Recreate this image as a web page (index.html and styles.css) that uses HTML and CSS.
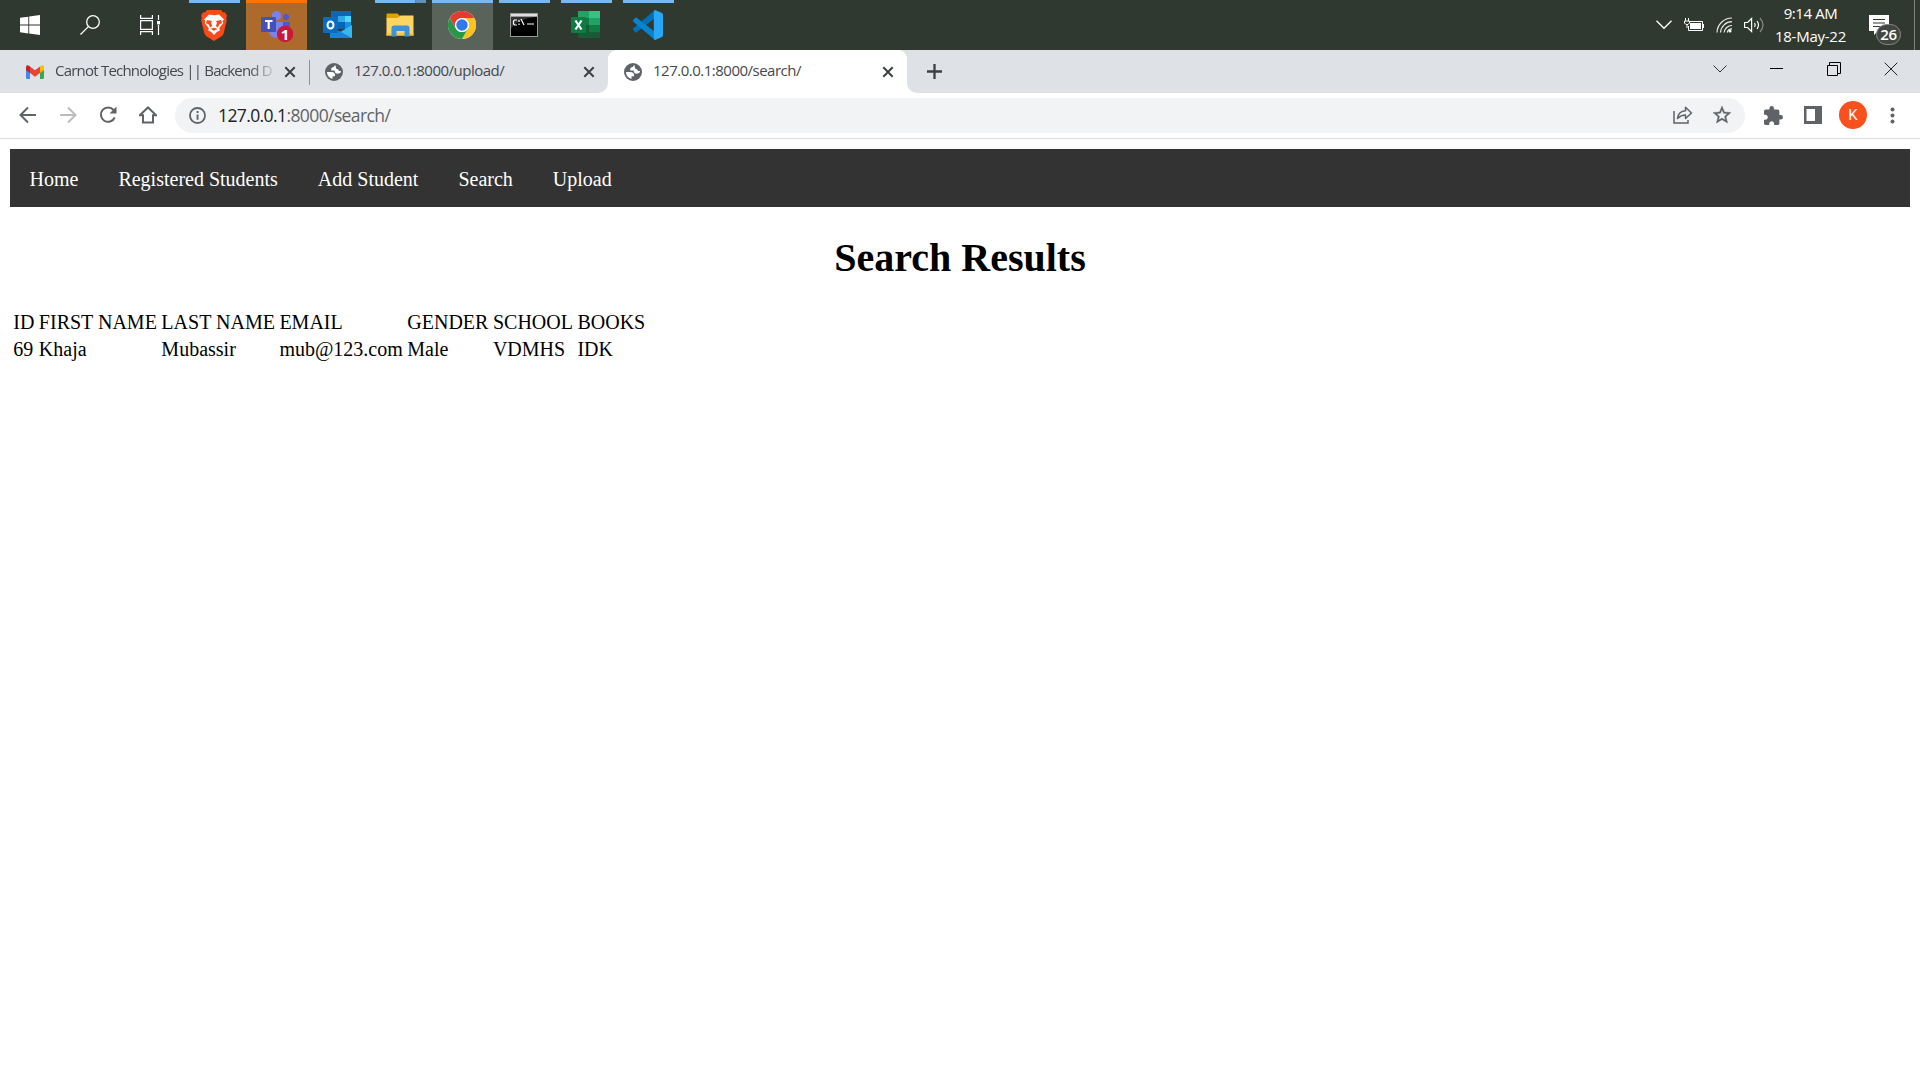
FILE: index.html
```html
<!DOCTYPE html>
<html lang="en">
<head>
<meta charset="utf-8">
<title>127.0.0.1:8000/search/</title>
<link rel="stylesheet" href="styles.css">
</head>
<body>
<svg class="defs" width="0" height="0">
  <symbol id="globe" viewBox="0 0 18 18"><circle cx="9" cy="9" r="9" fill="#5f6368"/><path fill="#fff" d="M2 9h4.200c2.800 0 4.200 1.400 3.900 4.300H7.600v2.500C4.200 15.200 2 12.200 2 9zM10.400 2.200C9.400 2.600 9 3.100 9 3.900 6.800 3.900 5.900 5.200 6.200 7.500h3.500c0 2.300 1.100 3.200 3.100 3.200 1.200 0 2.200-.5 3.100-1.400.1-.4 0-1-.1-1.600-.8.500-1.700.4-2.100-.3-.3-1-.9-1.500-2.300-1.500z"/></symbol>
  <symbol id="cross" viewBox="0 0 12 12"><path d="M1.300 1.300l9.400 9.400M10.700 1.300l-9.400 9.400" stroke="#3c4043" stroke-width="2" fill="none"/></symbol>
</svg>

<header class="taskbar">
  <div class="system">
    <svg width="20" height="20" viewBox="0 0 20 20"><path fill="#fff" d="M0 2.800L8.300 1.700V9.500H0zM9.200 1.500L20 0v9.500H9.200zM0 10.500h8.300v7.900L0 17.300zM9.200 10.500H20V20L9.200 18.500z"/></svg>
    <svg width="20" height="20" viewBox="0 0 20 20"><g fill="none" stroke="#fff" stroke-width="1.300"><circle cx="13" cy="7" r="6.300"/><path d="M8.600 11.400L.5 19.500"/></g></svg>
    <svg width="20" height="20" viewBox="0 0 20 20"><path fill="none" stroke="#fff" stroke-width="1.200" d="M.6 0v3.300h11.800V0M.6 5.600h11.800v8.800H.6zM.6 20v-3.300h11.800V20M18.500 0v5M18.500 10v10"/><path fill="#fff" d="M17 6h3v3.400h-3z"/></svg>
  </div>
  <div class="apps">
    <div class="app running">
      <svg width="26" height="31" viewBox="0 0 26 31"><path fill="#fb4a18" d="M6 0h14l2 2.500 2-.3 2 3.500-.8 2.500.6 2-3 12.500c-.5 2-1.500 3-3 4L13 31l-6.800-4.300c-1.500-1-2.500-2-3-4L.2 10.200l.6-2L0 5.700l2-3.500 2 .3z"/><path fill="#fff" d="M8 4.500l5 .8 5-.8 5 5-1.500 1.500.8 2-4 5 .5 2.500-3 1.500L13 25l-2.800-3-3-1.500.5-2.500-4-5 .8-2L3 9.500z"/><path fill="#fb4a18" d="M6 10l5 1-1 2 1.200 3-2 1.500-1.700-3.300-2.500-1zM20 10l-5 1 1 2-1.200 3 2 1.500 1.700-3.300 2.500-1zM9.500 18.800l3.500-1 3.500 1-3.500 2z"/></svg>
    </div>
    <div class="app alert">
      <svg width="32" height="32" viewBox="0 0 32 32"><circle cx="25" cy="6" r="3.100" fill="#5059c9"/><path fill="#5059c9" d="M19 11h10v10h-10z"/><circle cx="15.500" cy="4.700" r="4.700" fill="#7b83eb"/><path fill="#7b83eb" d="M8 11h14v9c0 9-14 9-14 0z"/><rect y="6" width="15" height="15" rx="1" fill="#4650bc"/><path stroke="#fff" stroke-width="2.200" d="M4 10h7.500M7.700 10v8"/><circle cx="24" cy="23" r="8.200" fill="#cc163a"/><text x="24" y="28.500" class="badge-digit">1</text></svg>
    </div>
    <div class="app">
      <svg width="30" height="28" viewBox="0 0 30 28"><path fill="#1066b5" d="M8 0h20v14H8z"/><path fill="#32a9e7" d="M15 5h7v6h-7z"/><path fill="#50d9ff" d="M22 5h6v6h-6z"/><path fill="#0364b8" d="M15 11h7v7h-7z"/><path fill="#1490df" d="M22 11h6v7h-6z"/><path fill="#35b8f1" d="M29 14v13H7l22-13z"/><path fill="#1784d9" d="M7 15l22 12H7z"/><rect y="6" width="15" height="16" rx="1" fill="#0a6cbe"/><ellipse cx="7.500" cy="14" rx="3" ry="3.500" fill="none" stroke="#fff" stroke-width="2"/></svg>
    </div>
    <div class="app running grouped">
      <svg width="28" height="24" viewBox="0 0 28 24"><path fill="#e4a000" d="M.5 1.500Q.5.500 1.500.500h10l2 2v3H.500z"/><path fill="#ffd562" d="M.5 5h11l3-2.500h13v20H.5z"/><path fill="#f9c440" d="M.5 20h27v2.500H.5z"/><path fill="#3b94da" d="M5.500 23.500V15q0-2.500 2.500-2.500h13q2.500 0 2.500 2.500v8.500h-5V18h-8v5.500z"/></svg>
    </div>
    <div class="app running focused">
      <svg width="28" height="28" viewBox="0 0 48 48"><circle cx="24" cy="24" r="24" fill="#fff"/><path fill="#e33b2e" d="M3.200 12A24 24 0 0 1 44.800 12H24A12 12 0 0 0 13.600 30z"/><path fill="#fcc31e" d="M44.800 12A24 24 0 0 1 24 48L34.400 30A12 12 0 0 0 24 12z"/><path fill="#279847" d="M24 48A24 24 0 0 1 3.200 12L13.600 30A12 12 0 0 0 34.400 30z"/><circle cx="24" cy="24" r="12" fill="#fff"/><circle cx="24" cy="24" r="9.800" fill="#3079ea"/></svg>
    </div>
    <div class="app running">
      <svg width="28" height="24" viewBox="0 0 28 24"><path fill="#999" d="M0 0h28v24H0z"/><path fill="#dce0e2" d="M1 1h26v2H1z"/><path fill="#000" d="M1 4h26v19H1z"/><path fill="#333" d="M1 4h26C14 5 5 9 1 16z"/><path fill="none" stroke="#fff" stroke-width="1.200" d="M7 7H4.500L3.500 8v3l1 1H7M9 7v2M9 10.500v1.500M11 6l3 6M17 11h7"/></svg>
    </div>
    <div class="app running">
      <svg width="30" height="28" viewBox="0 0 30 28"><path fill="#21a366" d="M7 0h12v7H7z"/><path fill="#33c481" d="M18 0h11v7H18z"/><path fill="#107c41" d="M7 7h11v7H7zM18 14h11v7H18z"/><path fill="#21a366" d="M18 7h11v7H18z"/><path fill="#185c37" d="M7 14h11v7h11v6H7z"/><rect y="6" width="15" height="16" rx="1" fill="#107c41"/><path stroke="#fff" stroke-width="2.200" d="M4.500 9.500l6 9M10.500 9.500l-6 9"/></svg>
    </div>
    <div class="app running">
      <svg width="30" height="30" viewBox="0 0 30 30"><path fill="#006fba" d="M22 0v8L4 22q-1 1-2 0L.4 20.300q-.8-1 0-2z"/><path fill="#0684d0" d="M22 30v-8L4 8Q3 7 2 8L.4 9.700q-.8 1 0 2z"/><path fill="#29a7f3" d="M22 0l7 3q1 .5 1 2v20q0 1.500-1 2l-7 3q-1.200-.2-1.200-2V2q0-1.700 1.200-2z"/></svg>
    </div>
  </div>
  <div class="tray">
    <svg width="16" height="10" viewBox="0 0 16 10"><path d="M.5.800L8 8.300 15.500.800" stroke="#fff" stroke-width="1.300" fill="none"/></svg>
    <svg class="battery" width="20" height="14" viewBox="0 0 20 14"><path fill="none" stroke="#fff" d="M6 3.500h12.500v9H4.500V8M19.500 6v4M1.500 0v3M4.500 0v3M.5 3h5v2L4 6.500H2L.5 5zM3 7v3"/><path fill="#fff" d="M6 5h11v6H6z"/></svg>
    <svg class="wifi" width="17" height="16" viewBox="0 0 17 16"><g fill="none" stroke="#e8ebe8" stroke-width="1.200"><path d="M1 15.500A15 15 0 0 1 16 1M4.500 15.500A11.500 11.500 0 0 1 16 4.700M8 15.500a8 8 0 0 1 8-7M11.200 15.500A5 5 0 0 1 16 11.800"/></g><circle cx="14" cy="14" r="1.500" fill="#fff"/></svg>
    <svg class="volume" width="20" height="18" viewBox="0 0 20 18"><g fill="none" stroke="#fff" stroke-width="1.200"><path d="M.6 6.500h3l4-4v13l-4-4h-3zM10.500 7q1.500 2 0 4M13 5q3 4 0 8"/><path stroke="#838a83" d="M16 2q6 7 0 14"/></g></svg>
    <div class="clock"><span>9:14 AM</span><span class="date">18-May-22</span></div>
    <div class="notice">
      <svg width="21" height="20" viewBox="0 0 21 20"><path fill="#fff" d="M0 0h20v16H9l-4 4v-4H0z"/><path stroke="#303930" stroke-width="1.100" d="M4 4.500h12M4 8h12M4 11.500h8"/></svg>
      <span class="count">26</span>
    </div>
    <div class="peek"></div>
  </div>
</header>

<div class="tabstrip">
  <div class="tab first">
    <svg width="18" height="14" viewBox="0 0 18 14"><path fill="#4285f4" d="M0 3l4 3v8H1.200Q0 14 0 12.800z"/><path fill="#34a853" d="M18 3l-4 3v8h2.800q1.200 0 1.200-1.200z"/><path fill="#fbbc04" d="M14 1.500q4-3 4 1V5l-4 3z"/><path fill="#c5221f" d="M4 1.500q-4-3-4 1V5l4 3z"/><path fill="#ea4335" d="M4 1.500L9 5.200l5-3.700V8l-5 3.800L4 8z"/></svg>
    <span class="title faded">Carnot Technologies || Backend D</span>
    <svg class="close" width="12" height="12"><use href="#cross"/></svg>
  </div>
  <div class="tab second">
    <svg width="18" height="18"><use href="#globe"/></svg>
    <span class="title">127.0.0.1:8000/upload/</span>
    <svg class="close" width="12" height="12"><use href="#cross"/></svg>
  </div>
  <div class="tab active">
    <svg width="18" height="18"><use href="#globe"/></svg>
    <span class="title">127.0.0.1:8000/search/</span>
    <svg class="close" width="12" height="12"><use href="#cross"/></svg>
  </div>
  <div class="rest">
    <svg width="15" height="15" viewBox="0 0 15 15"><path d="M7.500 0v15M0 7.500h15" stroke="#3c4043" stroke-width="2.300"/></svg>
    <div class="controls">
      <svg width="14" height="14" viewBox="0 0 14 14"><path d="M.5 3.500l6.500 6.500 6.500-6.500" stroke="#333" fill="none"/></svg>
      <svg width="14" height="14" viewBox="0 0 14 14"><path fill="#000" d="M0 6h13v1H0z"/></svg>
      <svg width="14" height="14" viewBox="0 0 14 14"><path d="M.5 3.500h10v10H.5zM2.500 3V.5h11v11H11" stroke="#000" fill="none"/></svg>
      <svg width="14" height="14" viewBox="0 0 14 14"><path d="M.7.700l12.600 12.600M13.300.700L.700 13.300" stroke="#222" fill="none"/></svg>
    </div>
  </div>
</div>

<div class="toolbar">
  <div class="nav-buttons">
    <svg width="18" height="18" viewBox="0 0 18 18"><path d="M17 9H2M9 1.500L1.500 9 9 16.500" stroke="#5f6368" stroke-width="2" fill="none"/></svg>
    <svg width="18" height="18" viewBox="0 0 18 18"><path d="M1 9h15M9 1.500L16.500 9 9 16.500" stroke="#babcbe" stroke-width="2" fill="none"/></svg>
    <svg width="18" height="18" viewBox="0 0 18 18"><path d="M15.700 11.500A7.200 7.200 0 1 1 14.600 4" stroke="#5f6368" stroke-width="2" fill="none"/><path fill="#5f6368" d="M17.500.500v7h-7z"/></svg>
    <svg width="18" height="18" viewBox="0 0 18 18"><path d="M.8 9.300L9 1.500l8.200 7.800H14v7.200H4V9.300z" stroke="#5f6368" stroke-width="2" fill="none"/></svg>
  </div>
  <div class="omnibox">
    <svg width="17" height="17" viewBox="0 0 17 17"><circle cx="8.500" cy="8.500" r="7.500" stroke="#5f6368" stroke-width="1.800" fill="none"/><path fill="#5f6368" d="M7.600 4h1.900v2H7.600zM7.600 7.400h1.900v5.300H7.600z"/></svg>
    <span class="url"><span class="host">127.0.0.1</span>:8000/search/</span>
    <svg class="share" width="20" height="18" viewBox="0 0 20 18"><g fill="none" stroke="#5f6368" stroke-width="1.500"><path d="M1 5v12h14v-3"/><path stroke-linejoin="round" d="M4.500 12.500C5 7.500 8 5 12.500 4.700V1.200L18.500 7l-6 5.500V9C9 9 7 10 4.500 12.500z"/></g></svg>
    <svg width="18" height="18" viewBox="2 2 20 20"><path fill="#5f6368" stroke="#5f6368" stroke-width=".4" d="M22 9.240l-7.190-.62L12 2 9.190 8.630 2 9.240l5.460 4.730L5.820 21 12 17.270 18.180 21l-1.630-7.030L22 9.240zM12 15.400l-3.760 2.270 1-4.280-3.320-2.880 4.380-.38L12 6.100l1.710 4.040 4.380.38-3.320 2.880 1 4.280L12 15.400z"/></svg>
  </div>
  <div class="actions">
    <svg width="19" height="19" viewBox="2 1 21 21"><path fill="#5f6368" d="M20.500 11H19V7c0-1.100-.9-2-2-2h-4V3.500a2.500 2.500 0 0 0-5 0V5H4c-1.100 0-1.990.9-1.990 2v3.800H3.500c1.490 0 2.700 1.210 2.700 2.700s-1.210 2.700-2.700 2.700H2V20c0 1.100.9 2 2 2h3.800v-1.500c0-1.490 1.210-2.700 2.700-2.700s2.700 1.210 2.700 2.700V22H17c1.100 0 2-.9 2-2v-4h1.500a2.500 2.500 0 0 0 0-5z"/></svg>
    <svg class="panel" width="18" height="18" viewBox="0 0 18 18"><path fill="#5f6368" fill-rule="evenodd" d="M0 0h18v18H0zM2.500 3v12H11V3z"/></svg>
    <span class="avatar">K</span>
    <svg class="more" width="5" height="17" viewBox="0 0 5 17"><g fill="#5f6368"><circle cx="2.500" cy="2.500" r="2"/><circle cx="2.500" cy="8.500" r="2"/><circle cx="2.500" cy="14.500" r="2"/></g></svg>
  </div>
</div>

<main class="page">
  <nav class="menu">
    <a>Home</a><a>Registered Students</a><a>Add Student</a><a>Search</a><a>Upload</a>
  </nav>
  <h1>Search Results</h1>
  <table>
    <tr><td>ID</td><td>FIRST NAME</td><td>LAST NAME</td><td>EMAIL</td><td>GENDER</td><td>SCHOOL</td><td>BOOKS</td></tr>
    <tr><td>69</td><td>Khaja</td><td>Mubassir</td><td>mub@123.com</td><td>Male</td><td>VDMHS</td><td>IDK</td></tr>
  </table>
</main>
</body>
</html>
```
FILE: styles.css
```css
* { box-sizing: border-box; }
body {
  margin: 0;
  height: 1080px;
  overflow: hidden;
  background: #fff;
  font-family: "Open Sans", "Noto Sans", sans-serif;
}
svg { display: block; flex: none; }
.defs { position: absolute; }

/* Taskbar */
.taskbar { display: flex; height: 50px; background: #303930; color: #fff; }
.system { display: flex; align-items: center; gap: 40px; padding-left: 20px; width: 184px; }
.apps { display: flex; }
.app {
  display: flex; align-items: center; justify-content: center;
  width: 62px; height: 50px; padding-right: 2px;
  background: no-repeat 5px 0 / 51px 3px;
}
.running { background-image: linear-gradient(#76b9ed, #76b9ed); }
.grouped { background-image: linear-gradient(90deg, #76b9ed 40px, #48779b 40px, #5f92bb 41px); }
.alert { background: linear-gradient(#ff7300 3px, #ad6a2d 3px); width: 61px; margin-right: 1px; padding: 3px 0 0; }
.focused { background-color: #5a635a; background-size: 61px 3px; background-position: 0 0; width: 61px; margin-right: 1px; }
.badge-digit { font: 700 15px "Open Sans", sans-serif; fill: #fff; text-anchor: middle; }

.tray { display: flex; align-items: center; margin-left: auto; }
.battery { margin-left: 12px; }
.wifi { margin-left: 12px; }
.volume { margin-left: 11px; }
.clock {
  display: flex; flex-direction: column; align-items: center;
  width: 71px; margin-left: 11px;
  font-size: 15px; line-height: 23px; letter-spacing: -0.4px; white-space: nowrap;
}
.date { letter-spacing: -0.25px; }
.notice { position: relative; margin-left: 23px; width: 45px; height: 20px; }
.count {
  position: absolute; left: 7px; top: 9px;
  width: 25px; height: 21px;
  border: 1px solid #858a85; border-radius: 11px;
  background: #414641;
  font-size: 15px; font-weight: 600; line-height: 19px; text-align: center; letter-spacing: -0.3px;
}
.peek { width: 6px; height: 50px; border-left: 1px solid #7c827c; }

/* Tab strip */
.tabstrip { display: flex; height: 43px; background: #fff; }
.tab { display: flex; align-items: center; height: 43px; background: #dee1e6; font-size: 15px; color: #45494d; white-space: nowrap; }
.first { width: 310px; padding-left: 26px; background: linear-gradient(#8c8f94, #8c8f94) no-repeat 309px 10px / 1px 25px #dee1e6; }
.second { width: 298px; padding-left: 15px; border-bottom-right-radius: 10px; }
.active { width: 299px; padding-left: 16px; background: radial-gradient(circle at 10px 10px, #fff 10px, #dee1e6 10.500px) 0 0 / 10px 10px no-repeat, radial-gradient(circle at 0 10px, #fff 10px, #dee1e6 10.500px) 100% 0 / 10px 10px no-repeat, #fff; }
.title { margin-left: 11px; width: 219px; padding-bottom: 3px; letter-spacing: -0.5px; line-height: 24px; }
.faded { letter-spacing: -0.78px; mask-image: linear-gradient(90deg, #000 195px, transparent 222px); }
.close { margin-left: 10px; }
.rest { display: flex; flex: 1; align-items: center; justify-content: space-between; padding: 0 22px 0 20px; background: #dee1e6; border-bottom-left-radius: 10px; }
.controls { display: flex; gap: 43px; padding-bottom: 5px; }

/* Toolbar */
.toolbar { display: flex; align-items: center; height: 46px; padding-bottom: 1px; border-bottom: 1px solid #dadce0; }
.nav-buttons { display: flex; gap: 22px; width: 175px; padding-left: 19px; }
.omnibox { display: flex; align-items: center; width: 1570px; height: 35px; padding: 0 14px; border-radius: 18px; background: #f1f3f4; }
.url { margin-left: 12px; font-size: 17.500px; letter-spacing: -0.6px; color: #5f6368; }
.host { color: #202124; }
.share { margin: 0 20px 0 auto; }
.actions { display: flex; align-items: center; padding-left: 19px; }
.panel { margin: 0 17px 0 21px; }
.avatar { width: 28px; height: 28px; border-radius: 50%; background: #f8511d; color: #fff; font: 15px/28px Roboto, sans-serif; text-align: center; }
.more { margin-left: 23px; }

/* Page, shown at 125% */
.page { padding: 10px; font-family: "Liberation Serif", serif; font-size: 20px; }
.menu { display: flex; height: 58px; background: #333; }
.menu a { padding: 19px 20px 16px; line-height: 23px; color: #fff; }
.menu a:first-child { padding-left: 19.500px; }
h1 { margin: 28px 0 27px; font-size: 40px; line-height: 46px; text-align: center; }
table { border-spacing: 2.500px; }
td { padding: 1.250px; line-height: 22px; }
```
